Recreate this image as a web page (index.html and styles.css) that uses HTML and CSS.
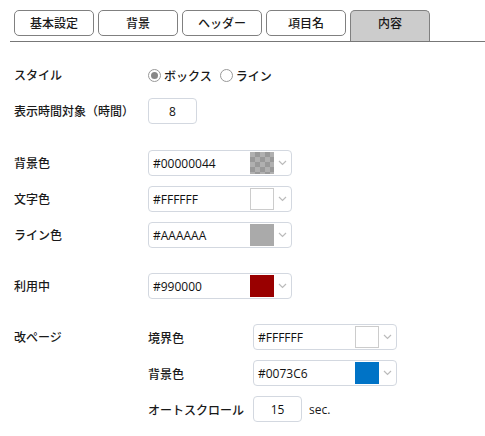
FILE: index.html
```html
<!DOCTYPE html>
<html lang="ja">
<head>
<meta charset="utf-8">
<link rel="stylesheet" href="styles.css">
</head>
<body>
<div class="tabs">
  <div class="tab">基本設定</div>
  <div class="tab">背景</div>
  <div class="tab">ヘッダー</div>
  <div class="tab">項目名</div>
  <div class="tab active">内容</div>
</div>
<div class="form">
  <div class="row">
    <div class="label">スタイル</div>
    <div class="radios">
      <span class="radio checked"></span><span class="rtext">ボックス</span>
      <span class="radio"></span><span class="rtext">ライン</span>
    </div>
  </div>
  <div class="row">
    <div class="label">表示時間対象（時間）</div>
    <div class="num">8</div>
  </div>
  <div class="row sec">
    <div class="label">背景色</div>
    <div class="sel"><span class="val">#00000044</span><span class="sw checker"></span><span class="chev"><svg width="9" height="6" viewBox="0 0 9 6"><path d="M1 1l3.5 3.5L8 1" fill="none" stroke="#bbb" stroke-width="1.2"/></svg></span></div>
  </div>
  <div class="row">
    <div class="label">文字色</div>
    <div class="sel"><span class="val">#FFFFFF</span><span class="sw white"></span><span class="chev"><svg width="9" height="6" viewBox="0 0 9 6"><path d="M1 1l3.5 3.5L8 1" fill="none" stroke="#bbb" stroke-width="1.2"/></svg></span></div>
  </div>
  <div class="row">
    <div class="label">ライン色</div>
    <div class="sel"><span class="val">#AAAAAA</span><span class="sw grey"></span><span class="chev"><svg width="9" height="6" viewBox="0 0 9 6"><path d="M1 1l3.5 3.5L8 1" fill="none" stroke="#bbb" stroke-width="1.2"/></svg></span></div>
  </div>
  <div class="row sec2">
    <div class="label">利用中</div>
    <div class="sel"><span class="val">#990000</span><span class="sw red"></span><span class="chev"><svg width="9" height="6" viewBox="0 0 9 6"><path d="M1 1l3.5 3.5L8 1" fill="none" stroke="#bbb" stroke-width="1.2"/></svg></span></div>
  </div>
  <div class="row sec2 top">
    <div class="label lab-page">改ページ</div>
    <div class="sub">
      <div class="subrow">
        <div class="sublabel">境界色</div>
        <div class="sel"><span class="val">#FFFFFF</span><span class="sw white"></span><span class="chev"><svg width="9" height="6" viewBox="0 0 9 6"><path d="M1 1l3.5 3.5L8 1" fill="none" stroke="#bbb" stroke-width="1.2"/></svg></span></div>
      </div>
      <div class="subrow">
        <div class="sublabel">背景色</div>
        <div class="sel"><span class="val">#0073C6</span><span class="sw blue"></span><span class="chev"><svg width="9" height="6" viewBox="0 0 9 6"><path d="M1 1l3.5 3.5L8 1" fill="none" stroke="#bbb" stroke-width="1.2"/></svg></span></div>
      </div>
      <div class="subrow">
        <div class="sublabel">オートスクロール</div>
        <div class="num">15</div>
        <span class="unit">sec.</span>
      </div>
    </div>
  </div>
</div>
</body>
</html>
```
FILE: styles.css
```css
* { box-sizing: border-box; }
body {
  margin: 0;
  background: #fff;
  color: #1a1a1a;
  font-family: "Noto Sans CJK JP", "Noto Sans", sans-serif;
  font-size: 12px;
}
.tabs {
  display: flex;
  align-items: flex-start;
  gap: 4px;
  margin-left: 10px;
  padding: 10px 0 0 4px;
  height: 42px;
  border-bottom: 1px solid #777;
}
.tab {
  width: 80px;
  height: 26px;
  border: 1px solid #808080;
  border-radius: 5px;
  background: #fff;
  display: flex;
  align-items: center;
  justify-content: center;
  color: #1a1a1a;
  font-weight: 500;
  line-height: 1;
}
.tab.active {
  height: 31px;
  background: #ccc;
  border-bottom: none;
  border-radius: 5px 5px 0 0;
  align-items: flex-start;
  padding-top: 6px;
}
.form {
  padding: 20px 0 0 14px;
  display: flex;
  flex-direction: column;
  gap: 10px;
}
.row {
  display: flex;
  align-items: center;
  min-height: 26px;
}
.row.sec { margin-top: 16px; }
.row.sec2 { margin-top: 15px; }
.row.top { align-items: flex-start; }
.label {
  width: 134px;
  flex: none;
  line-height: 26px;
  font-weight: 500;
}
.radios {
  display: flex;
  align-items: center;
  font-weight: 500;
}
.radio {
  width: 13px;
  height: 13px;
  border: 1px solid #999;
  border-radius: 50%;
  background: #fff;
  display: inline-block;
  position: relative;
  margin-right: 3px;
}
.radio.checked::after {
  content: "";
  position: absolute;
  left: 2px;
  top: 2px;
  width: 7px;
  height: 7px;
  border-radius: 50%;
  background: #888;
}
.rtext { margin-right: 8px; }
.num {
  width: 49px;
  height: 26px;
  border: 1px solid #d3d8e0;
  border-radius: 4px;
  display: flex;
  align-items: center;
  justify-content: center;
  font-family: "Open Sans", "Noto Sans", sans-serif;
  font-size: 12px;
  color: #111;
}
.sel {
  width: 144px;
  height: 26px;
  border: 1px solid #d3d8e0;
  border-radius: 4px;
  display: flex;
  align-items: center;
  padding-left: 4px;
  font-family: "Open Sans", "Noto Sans", sans-serif;
  font-size: 12px;
  color: #111;
}
.val { flex: 1; }
.sw {
  width: 24px;
  height: 22px;
  flex: none;
}
.sw.white { border: 1px solid #ccc; background: #fff; }
.sw.grey { background: #aaa; }
.sw.red { background: #990000; }
.sw.blue { background: #0073c6; }
.sw.checker {
  background-color: #b0b0b0;
  background-image:
    linear-gradient(45deg, #999 25%, transparent 25%, transparent 75%, #999 75%),
    linear-gradient(45deg, #999 25%, transparent 25%, transparent 75%, #999 75%);
  background-size: 10px 10px;
  background-position: 0 0, 5px 5px;
}
.chev {
  width: 17px;
  flex: none;
  display: flex;
  justify-content: center;
  align-items: center;
}
.chev svg { display: block; }
.sub {
  display: flex;
  flex-direction: column;
  gap: 10px;
}
.subrow {
  display: flex;
  align-items: center;
  min-height: 26px;
}
.sublabel { width: 105px; flex: none; font-weight: 500; }
.unit {
  margin-left: 7px;
  font-family: "Open Sans", "Noto Sans", sans-serif;
  font-size: 12px;
  color: #1a1a1a;
}
```
